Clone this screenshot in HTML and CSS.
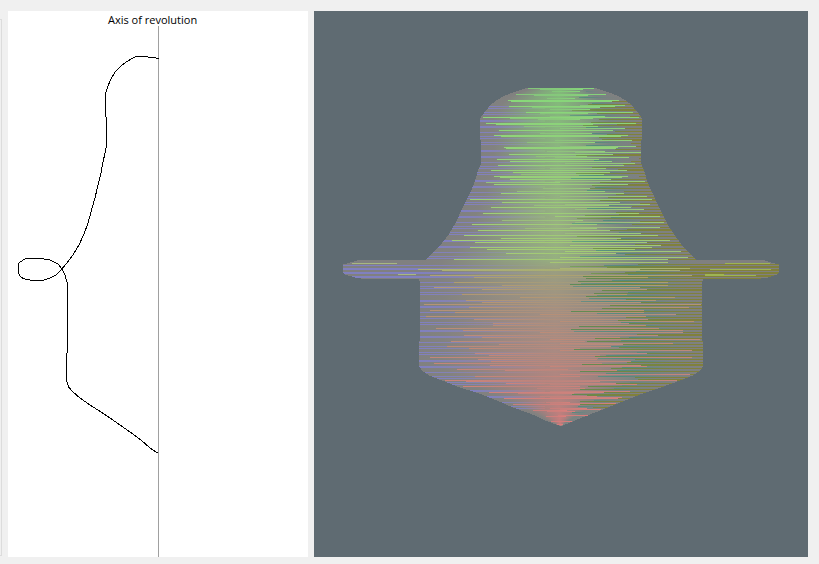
FILE: index.html
```
<!DOCTYPE html>
<html lang="en">
<head>
<meta charset="utf-8">
<title>Surface of revolution</title>
<link rel="stylesheet" href="styles.css">
</head>
<body>
<main class="workspace">
  <div class="group-edge"></div>
  <section class="sketch">
    <h1 class="axis-label">Axis of revolution</h1>
    <svg class="drawing" viewBox="8 26 300 531" preserveAspectRatio="xMidYMin meet" role="img" aria-label="Profile curve">
      <rect class="axis" x="158" y="26" width="1" height="531"/>
      <path class="profile" d="M158.500 59L155 57.500L148 57L142 56.500H136L133 58L127 61.500L121 66L115 72L111 79L108 86L105.500 94V116L106.500 118V145L105 153L103 162L101 173L98 185L95 198L91 212L88 223L84 234L79 245L73 255L67 263L61 270L56 275L50 278L43 280.500H32L23 278.500L20 276L18.500 273V264L20 262L25 259L29 258.500H41L50 260L58 264L62 269L65 275L67.500 284V352L66.500 354V380L68.500 387L73 392L80 398L90 405L101 412L110 418L120 425L130 432L141 440L150 448L158.500 453.500"/>
    </svg>
  </section>
  <section class="viewport">
    <svg class="drawing" id="surface" viewBox="314 11 494 546" preserveAspectRatio="xMidYMin meet" role="img" aria-label="Shaded surface"></svg>
  </section>
</main>
<script src="surface.js"></script>
</body>
</html>
```
FILE: styles.css
```
* {
  box-sizing: border-box;
}

body {
  margin: 0;
  background: #f0f0f0;
  color: #000;
  font-family: "Open Sans", "Noto Sans", sans-serif;
}

.workspace {
  display: grid;
  grid-template-columns: 2px minmax(0, 300fr) minmax(0, 494fr);
  column-gap: 6px;
  min-height: 100vh;
  padding: 11px 11px 7px 0;
}

.group-edge {
  margin: 8px 0 1px;
  border: 1px solid #dcdcdc;
  border-left: 0;
}

.sketch {
  display: flex;
  flex-direction: column;
  background: #fff;
}

.axis-label {
  margin: 0;
  padding-left: 100px;
  font-size: 11px;
  font-weight: 400;
  line-height: 17px;
  height: 15px;
}

.viewport {
  display: flex;
  background: #5f6b72;
}

.drawing {
  display: block;
  flex: 1;
  width: 100%;
  min-height: 0;
}

.axis {
  fill: #a0a0a0;
}

.profile {
  fill: none;
  stroke: #000;
  stroke-width: 1;
  shape-rendering: crispEdges;
}
```
FILE: surface.js
```
const svg = document.getElementById("surface");
const NS = "http://www.w3.org/2000/svg";

// Silhouette: row, left edge, right edge.
const outline = [
  [88, 525, 597], [92, 513, 609], [95, 505, 617], [100, 496, 626],
  [105, 490, 632], [110, 486, 636], [116, 481, 641], [119, 480, 642],
  [139, 480, 642], [140, 481, 641], [163, 481, 641], [165, 480, 642],
  [170, 478, 644], [180, 475, 647], [188, 472, 650], [198, 467, 655],
  [215, 459, 663], [225, 454, 668], [235, 448, 675], [245, 440, 682],
  [253, 432, 690], [259, 426, 696], [260, 357, 765], [262, 350, 771],
  [264, 343, 779], [272, 343, 779], [274, 345, 777], [277, 355, 768],
  [278, 361, 761], [279, 419, 703], [282, 420, 702], [340, 420, 702],
  [341, 419, 703], [366, 419, 703], [370, 422, 700], [375, 429, 693],
  [380, 442, 680], [387, 460, 661], [393, 479, 643], [400, 497, 625],
  [407, 513, 608], [415, 535, 587], [420, 545, 575], [425, 559, 563]
];

// Bright facets: row, start, end.
const facets = [
  [88, 528, 594], [89, 540, 583], [91, 552, 580], [94, 516, 606],
  [95, 534, 588], [98, 547, 575], [100, 508, 619], [101, 511, 612],
  [105, 580, 625], [106, 509, 615], [107, 532, 600], [109, 550, 590],
  [112, 526, 633], [113, 540, 588], [116, 550, 605], [117, 483, 639],
  [118, 510, 593], [119, 538, 580], [123, 486, 636], [124, 496, 593],
  [126, 524, 598], [128, 560, 625], [130, 499, 613], [133, 540, 592],
  [135, 494, 628], [136, 501, 621], [140, 555, 632], [142, 527, 595],
  [146, 560, 636], [147, 504, 618], [148, 506, 616], [151, 547, 605],
  [152, 575, 641], [154, 509, 613], [156, 536, 587], [157, 555, 629],
  [159, 497, 599], [161, 510, 612], [163, 565, 635], [165, 498, 624],
  [168, 550, 606], [170, 491, 627], [172, 513, 610], [174, 521, 604],
  [176, 494, 628], [177, 500, 622], [179, 510, 611], [181, 555, 645],
  [182, 486, 560], [184, 494, 628], [188, 543, 590], [191, 517, 605],
  [193, 501, 624], [196, 560, 647], [199, 470, 652], [202, 502, 620],
  [204, 565, 650], [205, 534, 609], [207, 491, 631], [209, 575, 644],
  [213, 483, 639], [216, 555, 660], [220, 502, 583], [222, 575, 664],
  [224, 472, 597], [227, 570, 660], [228, 525, 597], [230, 478, 610],
  [233, 565, 641], [235, 464, 658], [238, 501, 621], [240, 452, 670],
  [242, 475, 647], [245, 570, 661], [247, 470, 652], [249, 487, 635],
  [251, 565, 681], [253, 506, 616], [257, 560, 688], [259, 454, 668],
  [262, 550, 668], [263, 352, 397], [263, 725, 770], [268, 560, 690],
  [269, 418, 640], [270, 442, 680], [269, 710, 771], [274, 398, 416],
  [274, 705, 724], [275, 430, 692], [275, 705, 756], [277, 474, 648],
  [282, 454, 668], [285, 502, 668], [287, 434, 640], [289, 482, 647],
  [294, 462, 627], [297, 520, 675], [300, 466, 656], [302, 482, 641],
  [304, 424, 701], [307, 469, 689], [310, 430, 644], [312, 455, 644],
  [314, 540, 676], [316, 426, 646], [319, 474, 648], [321, 560, 694],
  [323, 493, 629], [325, 493, 646], [328, 436, 659], [330, 463, 683],
  [332, 540, 683], [335, 464, 658], [337, 482, 620], [339, 550, 700],
  [341, 451, 585], [343, 560, 673], [344, 499, 623], [346, 447, 611],
  [348, 469, 580], [350, 560, 692], [353, 475, 647], [355, 489, 600],
  [357, 430, 692], [359, 478, 597], [361, 491, 631], [363, 434, 602],
  [365, 490, 641], [366, 550, 647], [369, 457, 568], [370, 505, 617],
  [374, 560, 690], [376, 475, 580], [380, 445, 677], [381, 466, 600],
  [383, 506, 616], [384, 550, 637], [386, 463, 580], [388, 537, 585],
  [391, 550, 630], [392, 489, 604], [393, 518, 574], [396, 540, 597],
  [397, 550, 622], [398, 504, 618], [402, 546, 570], [403, 550, 616],
  [404, 513, 580], [408, 550, 587], [409, 560, 601], [410, 533, 567],
  [411, 547, 575], [415, 558, 588], [416, 546, 566], [421, 551, 572],
  [424, 557, 563]
];

const core = [
  [88, 130, 186, 122], [150, 140, 180, 128], [225, 152, 176, 130],
  [258, 150, 176, 128], [270, 154, 158, 128], [310, 164, 144, 130],
  [350, 170, 138, 130], [400, 182, 130, 126], [425, 202, 124, 124]
];
const bright = [
  [88, 134, 226, 122], [180, 154, 218, 118], [260, 168, 210, 112],
  [276, 180, 160, 108], [320, 190, 142, 116], [370, 204, 132, 120],
  [425, 236, 124, 124]
];

// Linear interpolation in a table keyed by its first column.
function sample(table, y) {
  let i = 1;
  while (i < table.length - 1 && table[i][0] < y) i++;
  const a = table[i - 1], b = table[i];
  const t = Math.max(0, Math.min(1, (y - a[0]) / (b[0] - a[0])));
  return a.slice(1).map((v, k) => Math.round(v + (b[k + 1] - v) * t));
}

const rgb = c => `rgb(${c.join()})`;
const mix = (a, b, t) => a.map((v, k) => Math.round(v + (b[k] - v) * t));
const gray = [128, 128, 128];
const defs = svg.appendChild(document.createElementNS(NS, "defs"));

function gradient(id, x1, x2, stops) {
  const g = document.createElementNS(NS, "linearGradient");
  g.id = id;
  g.setAttribute("gradientUnits", "userSpaceOnUse");
  g.setAttribute("x1", x1);
  g.setAttribute("x2", x2);
  stops.forEach(([offset, color]) => {
    const s = document.createElementNS(NS, "stop");
    s.setAttribute("offset", offset);
    s.setAttribute("stop-color", color);
    g.appendChild(s);
  });
  defs.appendChild(g);
}

function row(y, x1, x2, fill) {
  if (x2 <= x1) return;
  const r = document.createElementNS(NS, "rect");
  r.setAttribute("x", x1);
  r.setAttribute("y", y);
  r.setAttribute("width", x2 - x1);
  r.setAttribute("height", 1);
  r.setAttribute("fill", fill);
  svg.appendChild(r);
}

for (let y = 88; y <= 425; y++) {
  const [left, right] = sample(outline, y);
  const brim = y >= 260 && y <= 278;
  const gl = brim ? 419 : left, gr = brim ? 703 : right;
  const center = sample(core, y);
  const mid = rgb(center);
  const soft = rgb(mix(gray, center, 0.65));
  const noise = (y * 37 + (y >> 2) * 23) % 71;

  gradient("base" + y, gl, gr, [
    [0, "#808080"], [0.08, "#828280"], [0.3, soft], [0.48, mid],
    [0.62, soft], [0.8, "#788482"], [1, "#808080"]
  ]);
  row(y, left, right, `url(#base${y})`);

  // Facets turned to the left.
  if (brim ? y > 264 && y % 4 < 2 : y > 104 && y < 410 && (y % 6 === 0 || y % 15 === 1 || y % 15 === 7)) {
    gradient("violet" + y, gl, 545, [[0, "#8080c0"], [0.3, "#8684ae"], [1, mid]]);
    row(y, left, 545, `url(#violet${y})`);
  }

  // Facets turned to the right.
  const start = Math.min(right, 570 + Math.round(noise * (right > 640 ? 1 : 0.4)));
  if (brim ? y > 263 && y % 3 !== 1 : y > 98 && y < 409 && (y % 6 === 2 || y % 6 === 5 || y % 15 === 4)) {
    gradient("olive" + y, 565, gr, [[0, y < 275 ? "#7aa45f" : "#5c8c5a"], [0.45, "#708744"], [0.9, "#80803c"]]);
    row(y, start, right, `url(#olive${y})`);
  } else if (y % 3 === 1) {
    gradient("teal" + y, 550, gr, [[0, y < 265 ? "#73af80" : "#788f88"], [0.5, "#548a7e"], [0.8, "#778382"], [1, "#808080"]]);
    row(y, start, right, `url(#teal${y})`);
  }
}

facets.forEach(([y, x1, x2], i) => {
  const color = sample(bright, y);
  const center = sample(core, y);
  if (x2 < 420 || x1 > 702) {
    row(y, x1, x2, x1 > 702 ? "#9eb454" : "#a8b880");
    return;
  }
  const strong = x2 - x1 > 90;
  const lower = y > 276 && y < 390;
  gradient("facet" + i, x1, x2, [
    [0, rgb(mix(center, color, strong ? 0.8 : 0.3))],
    [0.5, rgb(mix(center, color, lower ? 0.25 : strong ? 0.7 : 0.4))],
    [1, rgb(mix(center, color, 0.7))]
  ]);
  row(y, x1, x2, `url(#facet${i})`);
});
```
